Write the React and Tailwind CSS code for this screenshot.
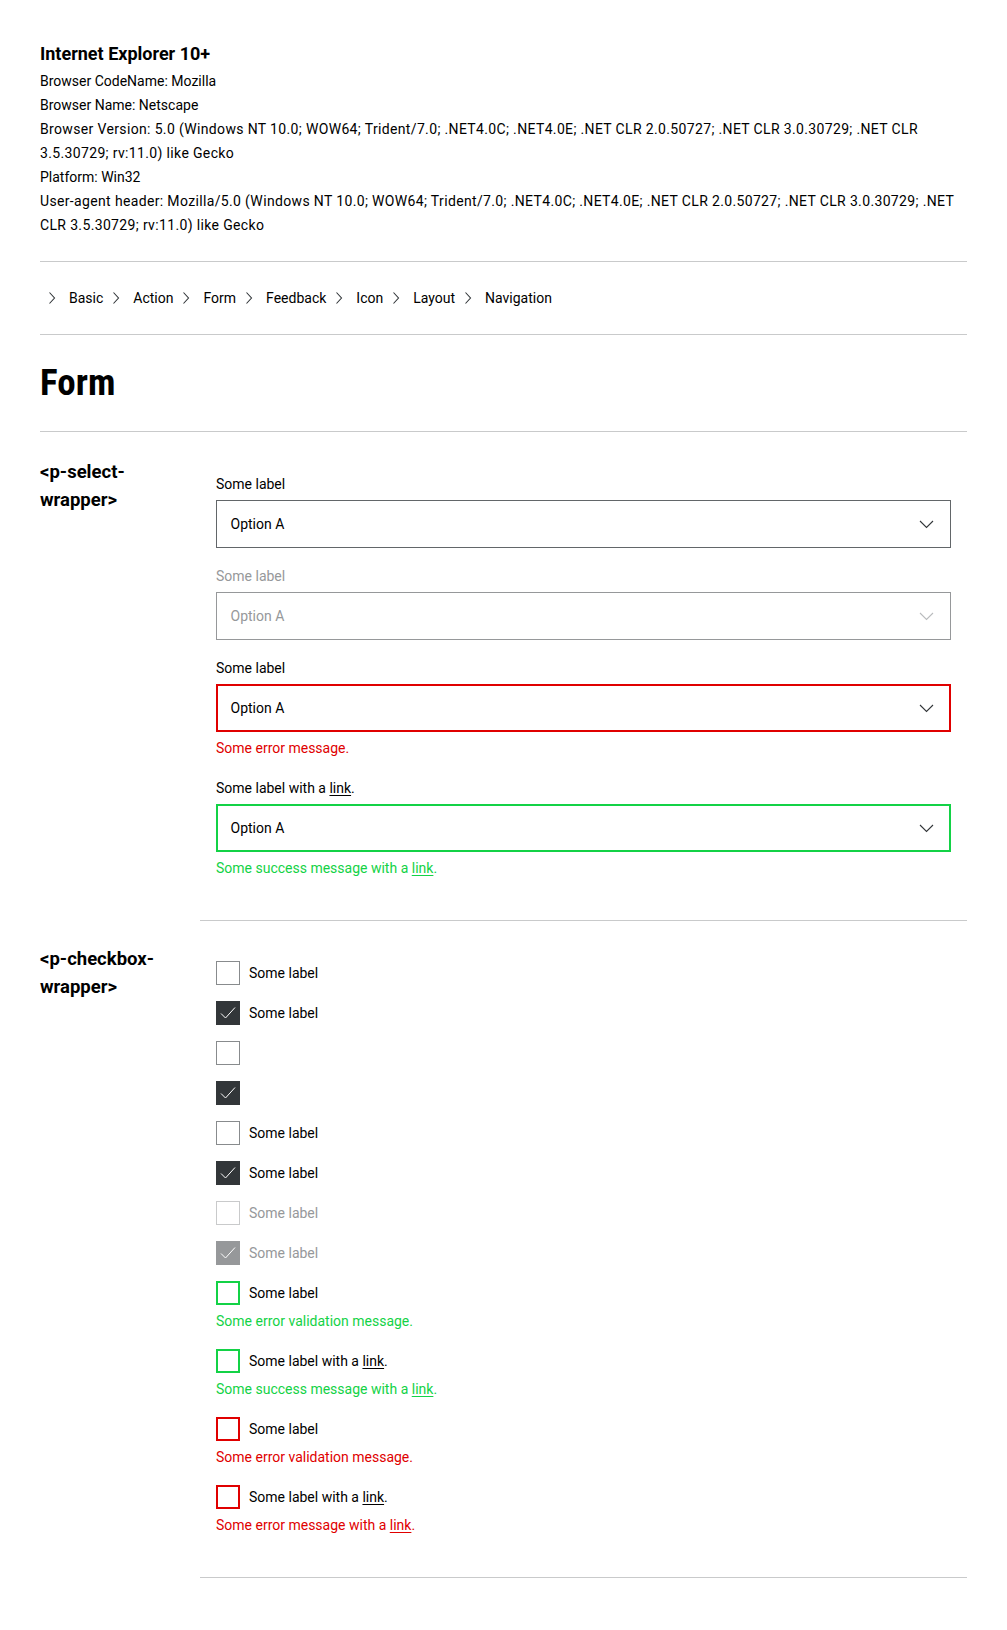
import React from "react";

const Chevron = ({ color = "#323639" }) => (
  <svg width="24" height="24" viewBox="0 0 24 24" fill="none" className="shrink-0">
    <polyline points="6,9 12.5,15.5 19,9" stroke={color} strokeWidth="1.1" />
  </svg>
);

const Crumb = () => (
  <svg width="16" height="16" viewBox="0 0 16 16" fill="none" className="shrink-0">
    <polyline points="3.5,2.5 8.5,8 3.5,13.5" stroke="#323639" strokeWidth="1.1" />
  </svg>
);

const Check = () => (
  <svg width="24" height="24" viewBox="0 0 24 24" fill="none">
    <polyline points="5,12.5 9.5,17 19,6.5" stroke="#ffffff" strokeWidth="1" />
  </svg>
);

function Select({ label, state }) {
  const disabled = state === "disabled";
  const border =
    state === "error"
      ? "border-2 border-[#e00000] pl-[12.5px] pr-[11px]"
      : state === "success"
      ? "border-2 border-[#13d246] pl-[12.5px] pr-[11px]"
      : disabled
      ? "border border-[#96989a] pl-[13.5px] pr-[12px]"
      : "border border-[#626669] pl-[13.5px] pr-[12px]";
  return (
    <div>
      <div className={`leading-6 ${disabled ? "text-[#96989a]" : "text-black"}`}>{label}</div>
      <div className={`mt-1 h-12 flex items-center justify-between ${border}`}>
        <span className={disabled ? "text-[#96989a]" : "text-black"}>Option A</span>
        <Chevron color={disabled ? "#b9bbbd" : "#323639"} />
      </div>
    </div>
  );
}

function Box({ kind }) {
  if (kind === "checked")
    return (
      <div className="w-6 h-6 bg-[#323639] shrink-0">
        <Check />
      </div>
    );
  if (kind === "disabledChecked")
    return (
      <div className="w-6 h-6 bg-[#96989a] shrink-0">
        <Check />
      </div>
    );
  const cls =
    kind === "success"
      ? "border-2 border-[#13d246]"
      : kind === "error"
      ? "border-2 border-[#e00000]"
      : kind === "disabled"
      ? "border border-[#c9cacb]"
      : "border border-[#888b8d]";
  return <div className={`w-6 h-6 shrink-0 bg-white ${cls}`} />;
}

function Checkbox({ kind, label, disabled, msg, msgColor }) {
  return (
    <div>
      <div className="flex items-center gap-[9px] h-6">
        <Box kind={kind} />
        {label && (
          <span className={`leading-6 ${disabled ? "text-[#96989a]" : "text-black"}`}>{label}</span>
        )}
      </div>
      {msg && <div className={`mt-1 leading-6 ${msgColor}`}>{msg}</div>}
    </div>
  );
}

const LinkLabel = () => (
  <>
    Some label with a <span className="underline underline-offset-2">link</span>.
  </>
);

export default function App() {
  const crumbs = ["Basic", "Action", "Form", "Feedback", "Icon", "Layout", "Navigation"];
  return (
    <div className="bg-white min-h-[1630px] px-10 pt-10 font-['Roboto',sans-serif] text-[14px] text-black">
      <div className="text-[18px] font-bold leading-[28px]">Internet Explorer 10+</div>
      <div className="leading-6 mt-px">
        <div>Browser CodeName: Mozilla</div>
        <div>Browser Name: Netscape</div>
        <div className="tracking-[0.35px]">
          Browser Version: 5.0 (Windows NT 10.0; WOW64; Trident/7.0; .NET4.0C; .NET4.0E; .NET CLR 2.0.50727; .NET CLR
          3.0.30729; .NET CLR 3.5.30729; rv:11.0) like Gecko
        </div>
        <div>Platform: Win32</div>
        <div className="tracking-[0.35px]">
          User-agent header: Mozilla/5.0 (Windows NT 10.0; WOW64; Trident/7.0; .NET4.0C; .NET4.0E; .NET CLR 2.0.50727;
          .NET CLR 3.0.30729; .NET CLR 3.5.30729; rv:11.0) like Gecko
        </div>
      </div>

      <div className="mt-6 border-t border-[#c9cacb] py-6">
        <div className="flex items-center gap-[7px] h-6 pl-[6px]">
          {crumbs.map((c) => (
            <div key={c} className="flex items-center">
              <Crumb />
              <span className="leading-6 ml-[7px]">{c}</span>
            </div>
          ))}
        </div>
      </div>

      <div className="border-t border-b border-[#c9cacb] pt-6 pb-6">
        <h1 className="text-[37px] leading-[48px] font-bold font-stretch-[75%]">Form</h1>
      </div>

      <div className="flex">
        <div className="w-[160px] shrink-0 pr-4 pt-[26px]">
          <div className="text-[18.5px] font-bold leading-[28px]">&lt;p-select-wrapper&gt;</div>
        </div>
        <div className="flex-1 border-b border-[#c9cacb] px-4 pt-10 pb-10 flex flex-col gap-4">
          <Select label="Some label" />
          <Select label="Some label" state="disabled" />
          <div>
            <Select label="Some label" state="error" />
            <div className="mt-1 leading-6 text-[#e00000]">Some error message.</div>
          </div>
          <div>
            <Select label={<LinkLabel />} state="success" />
            <div className="mt-1 leading-6 text-[#13d246]">
              Some success message with a <span className="underline underline-offset-2">link</span>.
            </div>
          </div>
        </div>
      </div>

      <div className="flex">
        <div className="w-[160px] shrink-0 pr-4 pt-[24px]">
          <div className="text-[18.5px] font-bold leading-[28px]">&lt;p-checkbox-wrapper&gt;</div>
        </div>
        <div className="flex-1 border-b border-[#c9cacb] px-4 pt-10 pb-10 flex flex-col gap-4">
          <Checkbox kind="empty" label="Some label" />
          <Checkbox kind="checked" label="Some label" />
          <Checkbox kind="empty" />
          <Checkbox kind="checked" />
          <Checkbox kind="empty" label="Some label" />
          <Checkbox kind="checked" label="Some label" />
          <Checkbox kind="disabled" label="Some label" disabled />
          <Checkbox kind="disabledChecked" label="Some label" disabled />
          <Checkbox
            kind="success"
            label="Some label"
            msg="Some error validation message."
            msgColor="text-[#13d246]"
          />
          <Checkbox
            kind="success"
            label={<LinkLabel />}
            msg={
              <>
                Some success message with a <span className="underline underline-offset-2">link</span>.
              </>
            }
            msgColor="text-[#13d246]"
          />
          <Checkbox
            kind="error"
            label="Some label"
            msg="Some error validation message."
            msgColor="text-[#e00000]"
          />
          <Checkbox
            kind="error"
            label={<LinkLabel />}
            msg={
              <>
                Some error message with a <span className="underline underline-offset-2">link</span>.
              </>
            }
            msgColor="text-[#e00000]"
          />
        </div>
      </div>
    </div>
  );
}
